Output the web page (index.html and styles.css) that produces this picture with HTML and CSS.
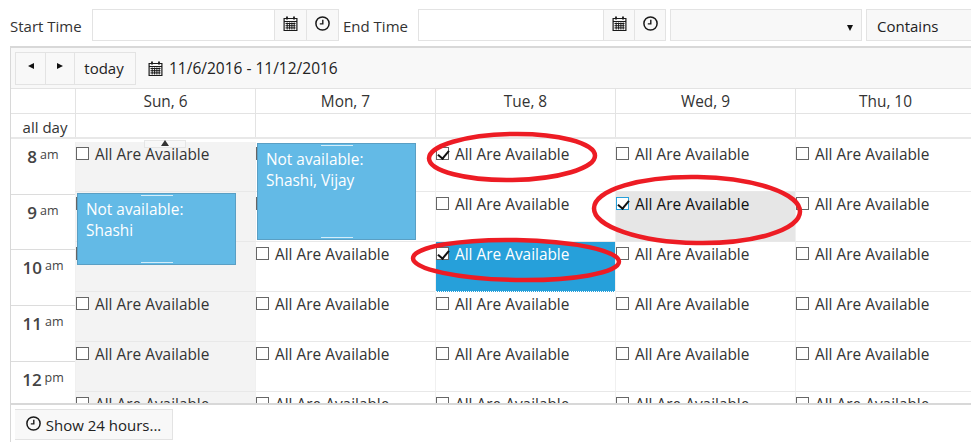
FILE: index.html
```html
<!DOCTYPE html>
<html lang="en">
<head>
<meta charset="utf-8">
<title>Scheduler</title>
<link rel="stylesheet" href="styles.css">
</head>
<body>
<svg width="0" height="0" class="defs">
  <symbol id="cal" viewBox="0 0 14 15">
    <path d="M.6 2.500h12.800v12H.6z M.6 5.500h12.800" fill="none" stroke="#1a1a1a" stroke-width="1.200"/>
    <path d="M3.500 .5v3M10.500 .5v3" stroke="#1a1a1a" stroke-width="1.800"/>
    <path d="M2 7.500h10M2 9.700h10M2 11.900h10M3.700 6.500v7M6.100 6.500v7M8.400 6.500v7M10.700 6.500v7" stroke="#1a1a1a" stroke-width="1"/>
  </symbol>
  <symbol id="clk" viewBox="0 0 15 15">
    <circle cx="7.500" cy="7.500" r="6.600" fill="none" stroke="#1a1a1a" stroke-width="1.500"/>
    <path d="M7.800 3.800v4.100H4.800" fill="none" stroke="#1a1a1a" stroke-width="1.400"/>
  </symbol>
</svg>

<div class="filters">
  <label class="lbl lbl-start">Start Time</label>
  <div class="picker picker-start">
    <div class="field"></div>
    <div class="pbtn"><svg class="ico"><use href="#cal"/></svg></div>
    <div class="pbtn"><svg class="ico"><use href="#clk"/></svg></div>
  </div>
  <label class="lbl lbl-end">End Time</label>
  <div class="picker picker-end">
    <div class="field"></div>
    <div class="pbtn"><svg class="ico"><use href="#cal"/></svg></div>
    <div class="pbtn"><svg class="ico"><use href="#clk"/></svg></div>
  </div>
  <div class="drop"><span class="caret"></span></div>
  <div class="drop drop-contains">Contains</div>
</div>

<div class="scheduler">
  <div class="toolbar">
    <div class="btn-group">
      <div class="tb"><span class="arr arr-l"></span></div>
      <div class="tb"><span class="arr arr-r"></span></div>
      <div class="tb tb-today">today</div>
    </div>
    <svg class="ico ico-range"><use href="#cal"/></svg>
    <span class="range">11/6/2016 - 11/12/2016</span>
  </div>

  <div class="head-row">
    <div class="corner"></div>
    <div class="hd">Sun, 6</div>
    <div class="hd">Mon, 7</div>
    <div class="hd">Tue, 8</div>
    <div class="hd">Wed, 9</div>
    <div class="hd">Thu, 10</div>
  </div>
  <div class="allday-row">
    <div class="corner corner-text">all day</div>
    <div class="ad"></div><div class="ad"></div><div class="ad"></div><div class="ad"></div><div class="ad"></div>
  </div>

  <div class="body">
    <div class="times">
      <div class="t">8<sup>am</sup></div>
      <div class="t">9<sup>am</sup></div>
      <div class="t">10<sup>am</sup></div>
      <div class="t">11<sup>am</sup></div>
      <div class="t">12<sup>pm</sup></div>
    </div>
    <div class="col col-off">
      <div class="cell"><span class="cb"></span>All Are Available</div>
      <div class="cell"><span class="cb"></span>All Are Available</div>
      <div class="cell"><span class="cb"></span>All Are Available</div>
      <div class="cell"><span class="cb"></span>All Are Available</div>
      <div class="cell"><span class="cb"></span>All Are Available</div>
      <div class="cell"><span class="cb"></span>All Are Available</div>
      <div class="grip"></div>
      <div class="ev ev-sun"><i class="h h-t"></i>Not available:<br>Shashi<i class="h h-b"></i></div>
    </div>
    <div class="col">
      <div class="cell"><span class="cb"></span>All Are Available</div>
      <div class="cell"><span class="cb"></span>All Are Available</div>
      <div class="cell"><span class="cb"></span>All Are Available</div>
      <div class="cell"><span class="cb"></span>All Are Available</div>
      <div class="cell"><span class="cb"></span>All Are Available</div>
      <div class="cell"><span class="cb"></span>All Are Available</div>
      <div class="ev ev-mon"><i class="h h-t"></i>Not available:<br>Shashi, Vijay<i class="h h-b"></i></div>
    </div>
    <div class="col">
      <div class="cell"><span class="cb on"></span>All Are Available</div>
      <div class="cell"><span class="cb"></span>All Are Available</div>
      <div class="cell cell-sel"><span class="cb on"></span>All Are Available</div>
      <div class="cell"><span class="cb"></span>All Are Available</div>
      <div class="cell"><span class="cb"></span>All Are Available</div>
      <div class="cell"><span class="cb"></span>All Are Available</div>
    </div>
    <div class="col">
      <div class="cell"><span class="cb"></span>All Are Available</div>
      <div class="cell cell-hover"><span class="cb on cb-focus"></span>All Are Available</div>
      <div class="cell"><span class="cb"></span>All Are Available</div>
      <div class="cell"><span class="cb"></span>All Are Available</div>
      <div class="cell"><span class="cb"></span>All Are Available</div>
      <div class="cell"><span class="cb"></span>All Are Available</div>
    </div>
    <div class="col">
      <div class="cell"><span class="cb"></span>All Are Available</div>
      <div class="cell"><span class="cb"></span>All Are Available</div>
      <div class="cell"><span class="cb"></span>All Are Available</div>
      <div class="cell"><span class="cb"></span>All Are Available</div>
      <div class="cell"><span class="cb"></span>All Are Available</div>
      <div class="cell"><span class="cb"></span>All Are Available</div>
    </div>
  </div>

  <div class="footer">
    <div class="tb tb-show"><svg class="ico ico-show"><use href="#clk"/></svg>Show 24 hours...</div>
  </div>
</div>

<svg class="marks" width="971" height="442" viewBox="0 0 971 442">
  <g fill="none" stroke="#ed1c24" stroke-width="4.500">
    <ellipse cx="512" cy="157" rx="83" ry="23" transform="rotate(-1 512 157)"/>
    <ellipse cx="697" cy="210" rx="103" ry="33" transform="rotate(1 697 210)"/>
    <ellipse cx="516" cy="260" rx="103" ry="20" transform="rotate(1 516 260)"/>
  </g>
</svg>
</body>
</html>
```
FILE: styles.css
```css
* { box-sizing: border-box; }
html, body { margin: 0; padding: 0; height: 442px; overflow: hidden; background: #fff; }
body {
  position: relative;
  width: 971px;
  font-family: "Open Sans", "Noto Sans", sans-serif;
  font-size: 15.400px;
  color: #333;
}
.defs { position: absolute; }

.filters { display: flex; align-items: stretch; width: 971px; height: 46px; padding: 9px 0 5px 10px; white-space: nowrap; overflow: hidden; }
.lbl { flex: none; display: flex; align-items: center; color: #333; padding-top: 2px; font-size: 15px; }
.lbl-start { width: 82px; }
.lbl-end { width: 75px; }
.picker { flex: none; display: flex; border: 1px solid #e3e3e3; margin-right: 4px; background: #f8f8f8; }
.picker-start { width: 247px; }
.picker-end { width: 248px; }
.field { flex: 1; background: #fff; }
.pbtn { width: 32px; display: flex; align-items: center; justify-content: center; border-left: 1px solid #e3e3e3; padding-bottom: 3px; }
.picker-end .pbtn { width: 31px; }
.ico { width: 15px; height: 15px; display: block; }
.drop { flex: none; position: relative; width: 192px; margin-right: 4px; border: 1px solid #e3e3e3; background: #f8f8f8; display: flex; align-items: center; padding: 2px 0 0 10px; color: #222; }
.drop-contains { width: 120px; margin-right: 0; font-size: 15px; }
.caret { position: absolute; right: 8px; top: 15px; border: 5px solid transparent; border-top: 6px solid #111; border-bottom: 0; border-left-width: 3.500px; border-right-width: 3.500px; }

.scheduler { width: 961px; height: 396px; margin-left: 10px; border: 0 solid #d8d8d8; border-width: 2px 0 0 1px; display: flex; flex-direction: column; overflow: hidden; }
.toolbar { height: 41px; flex: none; background: #f8f8f8; display: flex; align-items: center; padding-left: 4px; border-bottom: 1px solid #e3e3e3; }
.btn-group { display: flex; height: 33px; border: 1px solid #e3e3e3; }
.tb { display: flex; align-items: center; justify-content: center; width: 29px; border-left: 1px solid #e3e3e3; color: #222; }
.tb:first-child { border-left: 0; }
.tb-today { width: 61px; padding-right: 2px; font-size: 15px; }
.arr { display: block; border: 3.500px solid transparent; margin-bottom: 4px; }
.arr-l { border-right: 6px solid #111; border-left: 0; }
.arr-r { border-left: 6px solid #111; border-right: 0; }
.ico-range { margin: 0 6px 0 12px; }
.range { color: #222; font-size: 15.500px; }

.head-row, .allday-row { display: flex; flex: none; height: 25px; border-bottom: 1px solid #e3e3e3; background: #fff; }
.corner { width: 64px; flex: none; }
.corner-text { display: flex; align-items: center; justify-content: center; padding: 3px 0 0 4px; font-size: 15px; }
.hd, .ad { width: 180px; flex: none; border-left: 1px solid #e3e3e3; text-align: center; line-height: 25px; }
.allday-row { border-bottom-width: 2px; border-bottom-color: #e8e8e8; }

.body { flex: 1; min-height: 0; display: flex; overflow: hidden; }
.times { width: 64px; flex: none; }
.t { height: 55.700px; border-bottom: 1px solid #dcdcdc; text-align: center; font-size: 17px; padding-top: 7px; line-height: 22px; color: #444; font-weight: 600; }
.t sup { font-size: 12.500px; font-weight: 400; margin-left: 3px; vertical-align: 4px; line-height: 0; }
.col { position: relative; width: 180px; flex: none; padding-top: 3px; }
.cell { height: 50px; padding: 2px 0 0 0; border-bottom: 1px solid #e8e8e8; border-left: 1px solid #f0f0f0; line-height: 22px; white-space: nowrap; display: flex; align-items: flex-start; color: #333; }
.col-off .cell { background: #f3f3f3; }
.cell-hover { background: #e6e6e6; color: #111; }
.cell-sel { background: #26a0da; color: #fff; border-bottom: 1px dotted #fff; }
.cb { position: relative; flex: none; display: block; width: 13px; height: 13px; margin: 3px 6px 0 0; border: 1px solid #666; background: #fff; }
.cb.on::after { content: ""; position: absolute; left: 3px; top: 0; width: 5px; height: 9px; border: solid #111; border-width: 0 2px 2px 0; transform: rotate(40deg); }
.cb-focus { border-color: #26a0da; }
.grip { position: absolute; left: 69px; top: 1px; width: 42px; height: 8px; border: 1px solid #e3e3e3; background: #f8f8f8; opacity: .85; }
.grip::after { content: ""; position: absolute; left: 16px; top: -1px; border: 3px solid transparent; border-bottom: 6px solid #111; border-top: 0; border-left-width: 4px; border-right-width: 4px; }
.ev { position: absolute; left: 2px; width: 159px; background: #63bae6; border: 1px solid #5a9fc4; color: #fff; padding: 5px 8px; line-height: 21px; }
.ev-sun { top: 54px; height: 72px; }
.ev-mon { top: 4px; height: 97px; }
.h { position: absolute; left: 63px; width: 32px; height: 1px; background: #d5edf9; }
.h-t { top: 1px; }
.h-b { bottom: 1px; }

.footer { flex: none; height: 39px; border-top: 2px solid #d8d8d8; padding: 4px 0 0 4px; background: #fff; }
.tb-show { width: 158px; height: 31px; border: 1px solid #e3e3e3; background: #f8f8f8; font-size: 15px; }
.ico-show { margin-right: 5px; margin-bottom: 2px; }

.marks { position: absolute; left: 0; top: 0; pointer-events: none; }
```
